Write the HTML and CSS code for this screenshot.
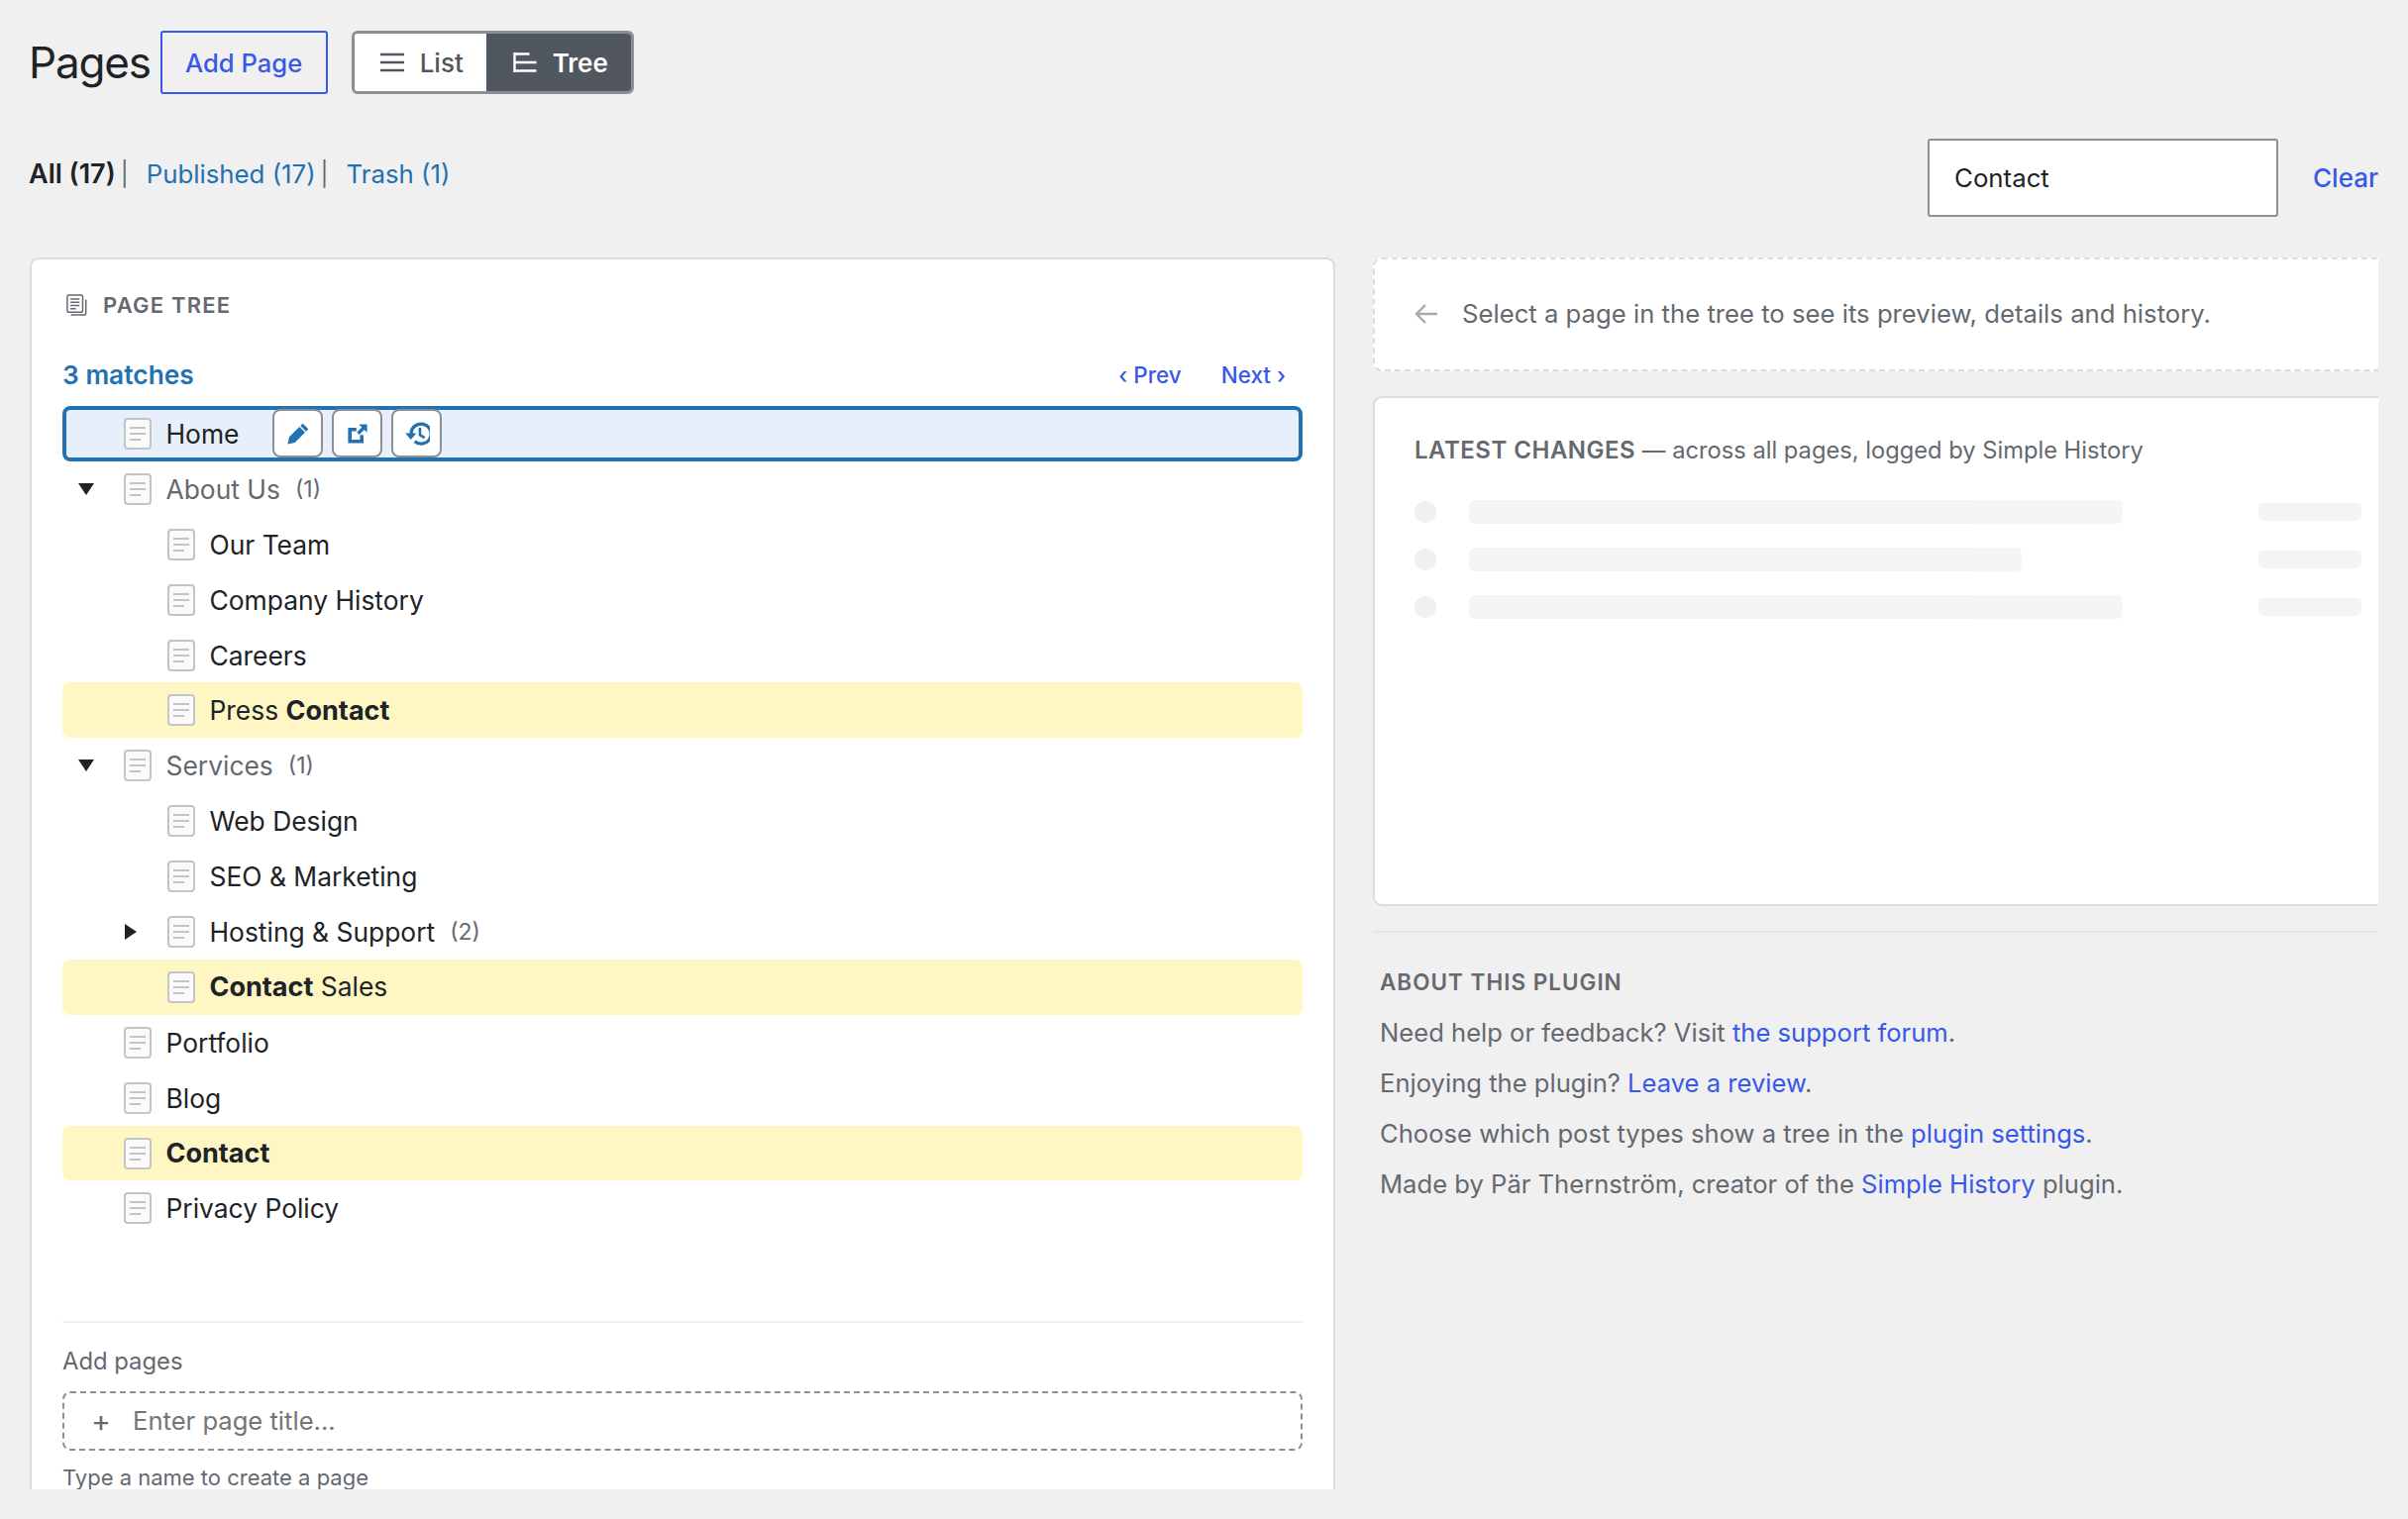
FILE: index.html
```html
<!DOCTYPE html>
<html lang="en">
<head>
<meta charset="utf-8">
<title>Pages</title>
<link rel="stylesheet" href="styles.css">
</head>
<body>
<div class="page">
  <header class="head">
    <h1 class="title">Pages</h1>
    <a class="add-btn">Add Page</a>
    <div class="toggle">
      <span class="tg tg-list"><svg class="tg-icon" viewBox="0 0 24 20"><path d="M0 2h24M0 10h24M0 18h24" fill="none" stroke="currentColor" stroke-width="2.6"/></svg>List</span>
      <span class="tg tg-tree"><svg class="tg-icon" viewBox="0 0 24 20"><path d="M1.5 0v20M1.5 1.5h15M1.5 10h22M1.5 18.5h22" fill="none" stroke="currentColor" stroke-width="2.4"/></svg>Tree</span>
    </div>
  </header>
  <div class="filter">
    <div class="subsub"><b class="cur">All (17)</b><i class="sep">|</i><a class="sub">Published (17)</a><i class="sep">|</i><a class="sub">Trash (1)</a></div>
    <div class="search"><div class="search-box">Contact</div><a class="clear">Clear</a></div>
  </div>
  <div class="cols">
    <section class="card tree-card">
      <div class="card-title">
        <svg class="pt-icon" viewBox="0 0 24 24" fill="none" stroke="#646970" stroke-width="1.6"><rect x="1" y="1" width="17" height="19" rx="2"/><path d="M4.5 5.5h10M4.5 9h10M4.5 12.5h10M4.5 16h6"/><path d="M21.5 6v15a2 2 0 0 1-2 2H5"/></svg>
        <span>PAGE TREE</span>
      </div>
      <div class="matches"><b>3 matches</b><span class="nav"><a>‹ Prev</a><a>Next ›</a></span></div>
      <div class="tree">
        <div class="row d0 selected"><span class="caret"></span><span class="doc"><i></i></span><span class="name">Home</span>
          <span class="acts">
            <span class="act"><svg viewBox="0 0 20 20"><path fill="#2271b1" d="M13.9 1.4l4.700 4.700-2 2-4.700-4.700zM11.100 4.200l4.700 4.700-8.600 8.600-6 1.300 1.300-6z"/></svg></span>
            <span class="act"><svg viewBox="0 0 20 20"><path fill="#2271b1" d="M2 5h7v3H5v7h7v-4h3v7H2zM11 2h7v7l-2.400-2.400-4.200 4.200-2-2 4.200-4.200z"/></svg></span>
            <span class="act"><svg class="hist" viewBox="0 2 22 20"><path fill="none" stroke="#2271b1" stroke-width="2.800" d="M6 12a8.500 8.500 0 1 1 3 6.600"/><path fill="#2271b1" d="M1 11.500h9.500L5.700 17z"/><path fill="none" stroke="#2271b1" stroke-width="2.200" d="M13.500 7v6l4 2.500"/></svg></span>
          </span>
        </div>
        <div class="row d0"><span class="caret down"></span><span class="doc"><i></i></span><span class="name muted">About Us</span><span class="count">(1)</span></div>
        <div class="row d1"><span class="caret"></span><span class="doc"><i></i></span><span class="name">Our Team</span></div>
        <div class="row d1"><span class="caret"></span><span class="doc"><i></i></span><span class="name">Company History</span></div>
        <div class="row d1"><span class="caret"></span><span class="doc"><i></i></span><span class="name">Careers</span></div>
        <div class="row d1 hit"><span class="caret"></span><span class="doc"><i></i></span><span class="name">Press <b>Contact</b></span></div>
        <div class="row d0"><span class="caret down"></span><span class="doc"><i></i></span><span class="name muted">Services</span><span class="count">(1)</span></div>
        <div class="row d1"><span class="caret"></span><span class="doc"><i></i></span><span class="name">Web Design</span></div>
        <div class="row d1"><span class="caret"></span><span class="doc"><i></i></span><span class="name">SEO &amp; Marketing</span></div>
        <div class="row d1"><span class="caret right"></span><span class="doc"><i></i></span><span class="name">Hosting &amp; Support</span><span class="count">(2)</span></div>
        <div class="row d1 hit"><span class="caret"></span><span class="doc"><i></i></span><span class="name"><b>Contact</b> Sales</span></div>
        <div class="row d0"><span class="caret"></span><span class="doc"><i></i></span><span class="name">Portfolio</span></div>
        <div class="row d0"><span class="caret"></span><span class="doc"><i></i></span><span class="name">Blog</span></div>
        <div class="row d0 hit"><span class="caret"></span><span class="doc"><i></i></span><span class="name"><b>Contact</b></span></div>
        <div class="row d0"><span class="caret"></span><span class="doc"><i></i></span><span class="name">Privacy Policy</span></div>
      </div>
      <div class="add-area">
        <div class="add-label">Add pages</div>
        <div class="add-input"><span class="plus">+</span><span>Enter page title...</span></div>
        <div class="add-hint">Type a name to create a page</div>
      </div>
    </section>
    <aside class="side">
      <div class="hint"><svg class="arrow" viewBox="0 0 22 20"><path d="M22 10H2M10 1l-9 9 9 9" fill="none" stroke="#a7aaad" stroke-width="2.4"/></svg>Select a page in the tree to see its preview, details and history.</div>
      <div class="card latest">
        <div class="latest-title"><b>LATEST CHANGES</b> — across all pages, logged by Simple History</div>
        <div class="sk-row"><span class="sk-dot"></span><span class="sk-bar"></span><span class="sk-end"></span></div>
        <div class="sk-row"><span class="sk-dot"></span><span class="sk-bar short"></span><span class="sk-end"></span></div>
        <div class="sk-row"><span class="sk-dot"></span><span class="sk-bar"></span><span class="sk-end"></span></div>
      </div>
      <div class="about">
        <h2 class="about-title">ABOUT THIS PLUGIN</h2>
        <p>Need help or feedback? Visit <a>the support forum</a>.</p>
        <p>Enjoying the plugin? <a>Leave a review</a>.</p>
        <p>Choose which post types show a tree in the <a>plugin settings</a>.</p>
        <p>Made by Pär Thernström, creator of the <a>Simple History</a> plugin.</p>
      </div>
    </aside>
  </div>
</div>
</body>
</html>
```
FILE: styles.css
```css
* { box-sizing: border-box; }
html, body { margin: 0; padding: 0; background: #f0f0f0; }
body { font-family: Inter, "Liberation Sans", sans-serif; color: #1d2327; font-size: 26.35px; }
.page { height: 1504px; padding: 30px 30px 0; overflow: hidden; }
a { color: #3858e9; }

.head { display: flex; align-items: center; height: 66px; }
.title { margin: 0 10px 0 -1px; font-size: 44px; font-weight: 400; letter-spacing: -1.2px; line-height: 66px; }
.add-btn { display: flex; align-items: center; justify-content: center; width: 169px; height: 64px; border: 2.5px solid #3858e9; border-radius: 3px; font-weight: 500; font-size: 25.6px; }
.toggle { display: flex; height: 64px; margin-left: 24px; border: 3px solid #8c8f94; border-radius: 6px; overflow: hidden; }
.tg { display: flex; align-items: center; gap: 16px; font-size: 26px; font-weight: 500; }
.tg-icon { width: 24px; height: 20px; }
.tg-list { width: 133px; padding-left: 26px; background: #fff; color: #50575e; }
.tg-tree { width: 146px; padding-left: 27px; background: #50575e; color: #fff; font-weight: 600; }

.filter { display: flex; justify-content: space-between; align-items: flex-start; margin-top: 44px; height: 120px; }
.subsub { display: flex; align-items: center; font-size: 25.8px; height: 40px; margin: 15px 0 0 -1px; }
.cur { font-weight: 600; font-size: 27px; }
.sep { font-style: normal; color: #646970; margin: 0 18px 0 5px; font-size: 24px; }
.sub { color: #2271b1; }
.search { display: flex; align-items: center; }
.search-box { width: 354px; height: 79px; padding-left: 25px; display: flex; align-items: center; background: #fff; border: 2.5px solid #8c8f94; border-radius: 3px; font-size: 25.8px; }
.clear { margin-left: 35px; font-weight: 500; font-size: 26px; }

.cols { display: flex; gap: 38px; align-items: flex-start; }
.card { background: #fff; border: 2px solid #dcdcde; border-radius: 9px; }
.tree-card { flex: 0 0 1318px; height: 1300px; padding: 0 31px; border-bottom: 0; }
.card-title { display: flex; align-items: center; gap: 15px; height: 36px; margin-top: 28px; margin-left: 4px; color: #646970; font-size: 22px; font-weight: 600; letter-spacing: 1.2px; }
.pt-icon { width: 22px; height: 24px; }
.matches { display: flex; justify-content: space-between; align-items: center; margin-top: 34px; height: 36px; color: #2271b1; font-size: 26.35px; }
.matches b { font-weight: 600; }
.nav { display: flex; gap: 40px; font-size: 22.5px; font-weight: 500; margin-right: 17px; }

.tree { margin-top: 14px; }
.row { display: flex; align-items: center; height: 55.9px; border-radius: 8px; }
.row b { font-weight: 700; font-size: 27px; }
.d0 { padding-left: 14px; }
.d1 { padding-left: 58px; }
.caret { flex: 0 0 48px; display: flex; }
.caret.down::before { content: ""; margin-left: 2px; border-left: 8px solid transparent; border-right: 8px solid transparent; border-top: 12px solid #1d2327; }
.caret.right::before { content: ""; margin-left: 5px; border-top: 8px solid transparent; border-bottom: 8px solid transparent; border-left: 12px solid #1d2327; }
.doc { flex: 0 0 28px; height: 32px; display: flex; align-items: center; justify-content: center; border: 2px solid #c3c4c7; border-radius: 4px; background: #fafafa; }
.doc i { display: block; width: 16px; height: 14px; background: linear-gradient(#c3c4c7 2px, transparent 2px) 0 0 / 100% 6px no-repeat, linear-gradient(#c3c4c7 2px, transparent 2px) 0 6px / 100% 6px no-repeat, linear-gradient(#c3c4c7 2px, transparent 2px) 0 12px / 11px 2px no-repeat; }
.name { margin-left: 14.5px; font-size: 26.4px; white-space: nowrap; }
.muted { color: #646970; }
.count { margin-left: 15px; color: #646970; font-size: 23px; }
.hit { background: #fef6c3; }
.selected { background: #e7effa; border: 4px solid #2271b1; padding-left: 10px; }
.acts { display: flex; gap: 9px; margin-left: 34px; }
.act { display: flex; align-items: center; justify-content: center; width: 51px; height: 49px; background: #fff; border: 2.5px solid #8c8f94; border-radius: 8px; }
.act svg { width: 24px; height: 24px; }
.act .hist { width: 26px; }

.add-area { margin-top: 85.5px; border-top: 2px solid #f0f0f1; padding-top: 23px; }
.add-label { font-size: 23.8px; color: #646970; line-height: 32px; }
.add-input { display: flex; align-items: center; height: 60px; margin-top: 14px; border: 2px dashed #8c8f94; border-radius: 8px; color: #757575; font-size: 25.6px; }
.plus { width: 69px; padding-left: 27px; font-size: 30px; color: #646970; }
.add-hint { margin-top: 12px; font-size: 22px; color: #646970; line-height: 30px; }

.side { flex: 0 0 1015px; overflow: hidden; }
.hint { display: flex; align-items: center; width: 1100px; height: 115px; padding: 0 0 2px 41px; background: #fff; border: 2px dashed #dcdcde; border-radius: 9px; color: #646970; font-size: 25.7px; }
.arrow { width: 22px; height: 20px; margin-right: 25px; }
.latest { width: 1100px; height: 515px; margin-top: 25px; padding: 36px 40px 0; }
.latest-title { font-size: 23.7px; color: #646970; line-height: 34px; margin-bottom: 21px; }
.latest-title b { font-size: 24px; font-weight: 600; letter-spacing: .5px; }
.sk-row { display: flex; align-items: center; height: 48px; }
.sk-dot { width: 22px; height: 22px; border-radius: 50%; background: #f0f0f1; }
.sk-bar { width: 660px; height: 24px; margin-left: 33px; border-radius: 6px; background: linear-gradient(90deg, #f4f4f4 510px, #f5f5f5 510px); }
.sk-bar.short { width: 558px; margin-right: 102px; }
.sk-end { width: 104px; height: 18px; margin-left: 137px; border-radius: 5px; background: #f4f4f4; }
.about { margin-top: 25px; border-top: 2px solid #e5e5e8; padding: 35px 7px 0; color: #646970; font-size: 25.6px; }
.about-title { margin: 0 0 10px; font-size: 22.5px; font-weight: 600; letter-spacing: 1px; line-height: 30px; color: #646970; }
.about p { margin: 0; height: 51px; line-height: 51px; white-space: nowrap; }
```
